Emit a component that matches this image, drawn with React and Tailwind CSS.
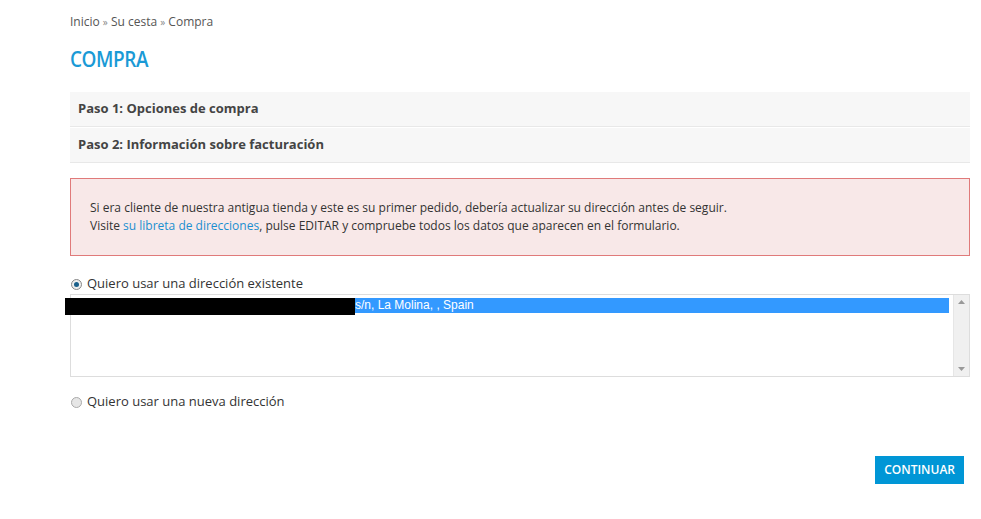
export default function App() {
  return (
    <div className="w-[981px] h-[519px] bg-white font-['Open_Sans',sans-serif] text-[#333]">
      <div className="pl-[70px] pr-[11px] pt-[13px]">
        <div className="text-[12px] leading-[18px] text-[#555]">
          Inicio <span className="text-[#888] text-[10px]">»</span> Su cesta{" "}
          <span className="text-[#888] text-[10px]">»</span> Compra
        </div>
        <h1 className="mt-[14px] text-[22px] leading-[26px] font-semibold text-[#1a9ad6] tracking-[-0.5px] scale-x-[0.86] origin-left">
          COMPRA
        </h1>
        <div className="mt-[21px]">
          <div className="h-[35px] bg-[#f7f7f7] border-b border-[#e8e8e8] flex items-center pl-[8px] text-[13px] font-bold text-[#444]">
            Paso 1: Opciones de compra
          </div>
          <div className="mt-[1px] h-[35px] bg-[#f7f7f7] border-b border-[#e8e8e8] flex items-center pl-[8px] text-[13px] font-bold text-[#444]">
            Paso 2: Información sobre facturación
          </div>
        </div>
        <div className="mt-[15px] h-[78px] bg-[#f8e8e8] border border-[#e07a7a] pl-[19px] pt-[20px] text-[12px] leading-[18px] text-[#333]">
          <div>Si era cliente de nuestra antigua tienda y este es su primer pedido, debería actualizar su dirección antes de seguir.</div>
          <div>
            Visite <span className="text-[#1a8fd0]">su libreta de direcciones</span>, pulse EDITAR y compruebe todos los datos que aparecen en el formulario.
          </div>
        </div>
        <div className="mt-[19px] flex items-center h-[18px] text-[13px]">
          <span className="w-[11px] h-[11px] rounded-full border border-[#888] bg-[#eee] flex items-center justify-center mr-[5px] ml-[1px]">
            <span className="w-[5px] h-[5px] rounded-full bg-[#1a5f8a]"></span>
          </span>
          Quiero usar una dirección existente
        </div>
        <div className="relative mt-[1px] h-[83px] border border-[#ddd] flex">
          <div className="flex-1 pt-[3px] pl-[1px] pr-[4px]">
            <div className="h-[15px] bg-[#3399ff] text-white font-['Liberation_Sans',sans-serif] text-[12px] leading-[15px] pl-[283px]">
              s/n, La Molina, , Spain
            </div>
          </div>
          <div className="w-[16px] bg-[#f0f0f0] border-l border-[#e6e6e6] flex flex-col justify-between items-center py-[5px]">
            <svg width="7" height="4" viewBox="0 0 7 4"><path d="M0 4 L3.5 0 L7 4 Z" fill="#999" /></svg>
            <svg width="7" height="4" viewBox="0 0 7 4"><path d="M0 0 L3.5 4 L7 0 Z" fill="#999" /></svg>
          </div>
          <div className="absolute left-[-6px] top-[3px] w-[290px] h-[17px] bg-black"></div>
        </div>
        <div className="mt-[16px] flex items-center h-[18px] text-[13px]">
          <span className="w-[11px] h-[11px] rounded-full border border-[#aaa] bg-[#e6e6e6] mr-[5px] ml-[1px]"></span>
          Quiero usar una nueva dirección
        </div>
        <div className="mt-[45px] flex justify-end pr-[6px]">
          <button className="h-[28px] px-[9px] bg-[#0096d6] text-white text-[12px] font-semibold">CONTINUAR</button>
        </div>
      </div>
    </div>
  );
}
